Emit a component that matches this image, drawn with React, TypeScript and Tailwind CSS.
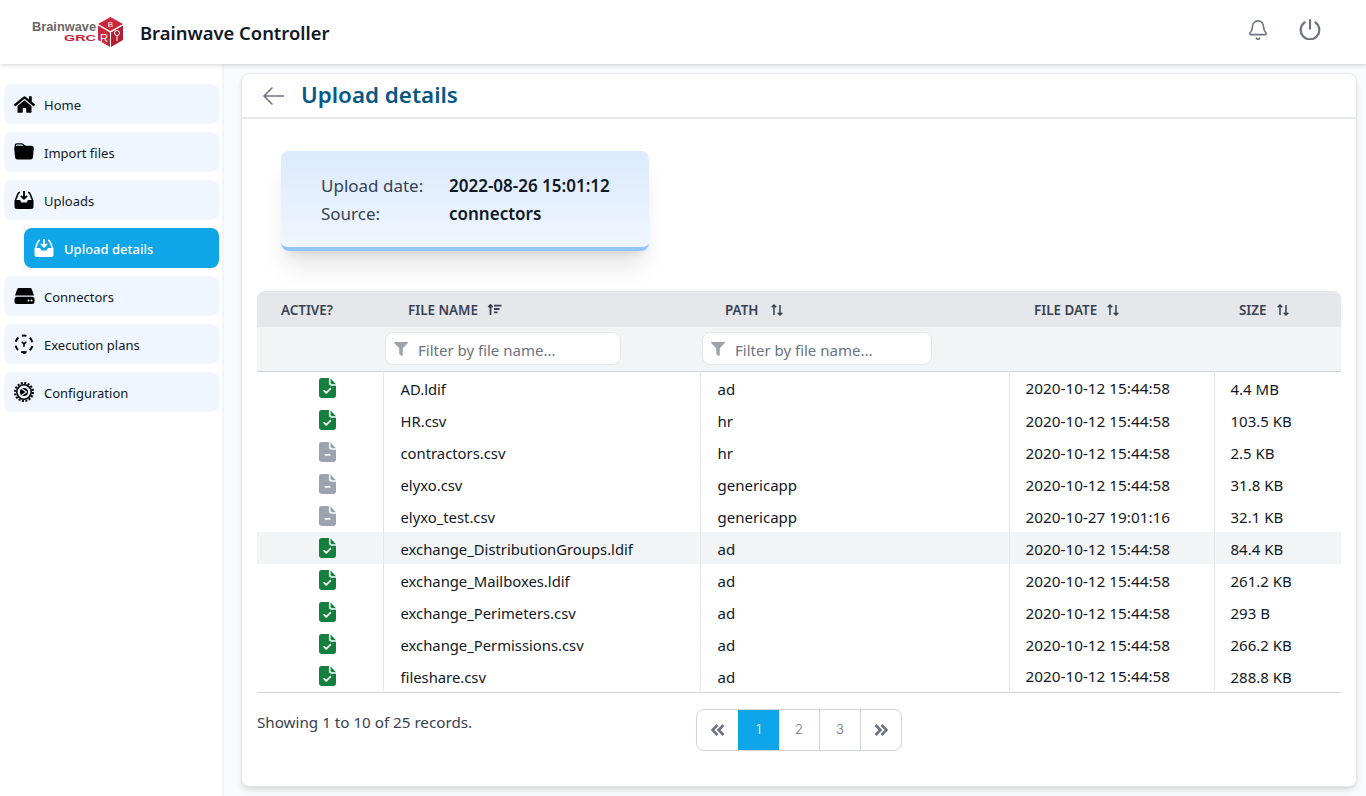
import { Bell } from "lucide-react";
import { BsFolderFill } from "react-icons/bs";
import { FaFilter, FaHome } from "react-icons/fa";

const rows = [
  { active: true, name: "AD.ldif", path: "ad", date: "2020-10-12 15:44:58", size: "4.4 MB" },
  { active: true, name: "HR.csv", path: "hr", date: "2020-10-12 15:44:58", size: "103.5 KB" },
  { active: false, name: "contractors.csv", path: "hr", date: "2020-10-12 15:44:58", size: "2.5 KB" },
  { active: false, name: "elyxo.csv", path: "genericapp", date: "2020-10-12 15:44:58", size: "31.8 KB" },
  { active: false, name: "elyxo_test.csv", path: "genericapp", date: "2020-10-27 19:01:16", size: "32.1 KB" },
  { active: true, name: "exchange_DistributionGroups.ldif", path: "ad", date: "2020-10-12 15:44:58", size: "84.4 KB" },
  { active: true, name: "exchange_Mailboxes.ldif", path: "ad", date: "2020-10-12 15:44:58", size: "261.2 KB" },
  { active: true, name: "exchange_Perimeters.csv", path: "ad", date: "2020-10-12 15:44:58", size: "293 B" },
  { active: true, name: "exchange_Permissions.csv", path: "ad", date: "2020-10-12 15:44:58", size: "266.2 KB" },
  { active: true, name: "fileshare.csv", path: "ad", date: "2020-10-12 15:44:58", size: "288.8 KB" },
];

function InboxIcon() {
  return (
    <svg width="22" height="22" viewBox="0 0 22 22" fill="currentColor">
      <path d="M7 3.500H6.500a1.500 1.500 0 0 0-1.400 1L2.500 11M15 3.500h.5a1.500 1.500 0 0 1 1.400 1L19.500 11" fill="none" stroke="currentColor" strokeWidth="1.600" />
      <path d="M1.500 11h5.500l1.500 2.500h5L15 11h5.500v6.500a2.500 2.500 0 0 1-2.500 2.500H4a2.500 2.500 0 0 1-2.500-2.500z" />
      <path d="M11 2v7.500M8 6.800l3 3 3-3" fill="none" stroke="currentColor" strokeWidth="1.800" />
    </svg>
  );
}

function DriveIcon() {
  return (
    <svg width="21" height="18" viewBox="0 0 21 18" fill="currentColor">
      <path d="M5 1h11a2 2 0 0 1 1.900 1.400L20 8.500H1l2.100-6.100A2 2 0 0 1 5 1z" />
      <path d="M3 9.800h15a2.500 2.500 0 0 1 2.500 2.500v2.200A2.500 2.500 0 0 1 18 17H3a2.500 2.500 0 0 1-2.500-2.500v-2.200A2.500 2.500 0 0 1 3 9.800z" />
      <circle cx="14.500" cy="13.400" r="1" fill="#eff6ff" />
      <circle cx="17.500" cy="13.400" r="1" fill="#eff6ff" />
    </svg>
  );
}

function PlansIcon() {
  return (
    <svg width="22" height="22" viewBox="0 0 22 22" fill="none" stroke="currentColor">
      <circle cx="11" cy="11" r="8.500" strokeWidth="2" strokeDasharray="5 3.900" strokeDashoffset="2.500" transform="rotate(-90 11 11)" />
      <path d="M8.800 8.800 11 11l2.200-2.200M11 11v2.800" strokeWidth="1.600" />
      <path d="M8.500 18.500h5L11 21z" fill="currentColor" strokeWidth="0.500" />
    </svg>
  );
}

function GearIcon() {
  return (
    <svg width="22" height="22" viewBox="0 0 22 22" fill="none" stroke="currentColor">
      <circle cx="11" cy="11" r="9" strokeWidth="2" strokeDasharray="2 1.535" />
      <circle cx="11" cy="11" r="7.200" strokeWidth="1.600" />
      <circle cx="11" cy="11" r="4" fill="currentColor" stroke="none" />
      <path d="M8.500 7.500 13.500 11l-5 3.500" stroke="#eff6ff" strokeWidth="1.100" />
    </svg>
  );
}

function SortIcon({ wide }: { wide?: boolean }) {
  return (
    <svg width="14" height="14" viewBox="0 0 14 14" fill="none" stroke="currentColor" strokeWidth="1.500" className={`${wide ? "ml-3" : "ml-[9px]"} text-[#374151]`}>
      <path d="M4 12V2M1.700 4.300 4 2l2.300 2.300M10 2v10M7.700 9.700 10 12l2.300-2.300" />
    </svg>
  );
}

function SortedIcon() {
  return (
    <svg width="15" height="14" viewBox="0 0 15 14" fill="none" stroke="currentColor" strokeWidth="1.800" className="ml-[9px] text-[#374151]">
      <path d="M3.500 12V2M1.300 4.200 3.500 2l2.200 2.200M7 2.700h7.500M7 6h5.500M7 9.300h3.500" />
    </svg>
  );
}

function FileIcon({ active }: { active: boolean }) {
  return (
    <svg width="17" height="20" viewBox="0 0 18 21" fill="currentColor" className={`${active ? "text-[#15803d]" : "text-[#9ca3af]"} ml-4`}>
      <path d="M2.500 0H10.500v5.500a2.500 2.500 0 0 0 2.500 2.500h5v10.500a2.500 2.500 0 0 1-2.500 2.500h-13A2.500 2.500 0 0 1 0 18.500v-16A2.500 2.500 0 0 1 2.500 0z" />
      <path d="M12.200 0.500 18 6.500h-4.300a1.500 1.500 0 0 1-1.500-1.500z" />
      {active ? (
        <path d="M5 13l2.700 2.700 5-5" fill="none" stroke="#fff" strokeWidth="1.800" />
      ) : (
        <path d="M6 13.500h6" fill="none" stroke="#fff" strokeWidth="1.800" />
      )}
    </svg>
  );
}

function DoubleAngle({ right }: { right?: boolean }) {
  return (
    <svg width="14" height="12" viewBox="0 0 14 12" fill="none" stroke="currentColor" strokeWidth="2.600">
      <path d={right ? "M1.500 1l5 5-5 5M7.500 1l5 5-5 5" : "M6.500 1 1.500 6l5 5M12.500 1l-5 5 5 5"} />
    </svg>
  );
}

function NavItem({ icon, label, active, sub }: { icon: React.ReactNode; label: string; active?: boolean; sub?: boolean }) {
  return (
    <div className={`${sub ? "ml-5" : ""} ${active ? "bg-[#0ea5e9] text-white font-medium" : "bg-[#eff6ff] text-[#111827]"} h-10 rounded-lg flex items-center pl-[9px] text-[13px]`}>
      <span className={`w-[22px] flex justify-center ${active ? "text-white" : "text-black"}`}>{icon}</span>
      <span className="ml-[9px] pt-[3px]">{label}</span>
    </div>
  );
}

// logo: wordmark + red cube
function Logo() {
  return (
    <svg width="92" height="32" viewBox="0 0 92 32" className="ml-8 shrink-0">
      <text x="0" y="15.300" fontSize="12" fontWeight="700" fontFamily="Liberation Sans" fill="#6b6663" textLength="64" lengthAdjust="spacingAndGlyphs">Brainwave</text>
      <text x="32" y="25.200" fontSize="9" fontWeight="700" fontFamily="Liberation Sans" fill="#c8202f" textLength="32" lengthAdjust="spacingAndGlyphs">GRC</text>
      <g transform="translate(65 0)">
        <path d="M13.500 1 26 8 13.500 15 1 8z" fill="#c8283a" />
        <path d="M1 9.500 13 16.500V31L1 24z" fill="#c8283a" />
        <path d="M14 16.500 26 9.500V24L14 31z" fill="#b31f30" />
        <text x="13.500" y="10.500" textAnchor="middle" fontSize="8" fill="#fff" fontFamily="Liberation Sans">B</text>
        <text x="7" y="26" textAnchor="middle" fontSize="11" fill="#fff" fontFamily="Liberation Sans">R</text>
        <circle cx="20" cy="17" r="2.500" fill="none" stroke="#fff" strokeWidth="1" />
        <path d="M20 19.500V25" stroke="#fff" strokeWidth="1" />
      </g>
    </svg>
  );
}

function FilterInput({ width }: { width: string }) {
  return (
    <div className={`${width} h-[33px] bg-white border border-[#e5e7eb] rounded-lg flex items-center pl-2 text-[15px] text-[#6b7280]`}>
      <FaFilter size={14} className="text-[#9ca3af]" />
      <span className="ml-[10px] pt-[2px]">Filter by file name...</span>
    </div>
  );
}

export default function App() {
  return (
    <div className="h-screen overflow-hidden flex flex-col bg-[#f9fafb] font-['Noto_Sans',sans-serif]">
      <header className="h-16 shrink-0 bg-white shadow-[0_1px_4px_rgba(0,0,0,0.18)] z-10 flex items-center">
        <Logo />
        <h1 className="ml-4 pt-[2px] text-[18.4px] font-semibold text-[#111827]">Brainwave Controller</h1>
        <div className="ml-auto flex items-center gap-[30px] mr-[45px] mb-[5px] text-[#6b7280]">
          <Bell size={22} strokeWidth={1.75} />
          <svg width="22" height="21" viewBox="0 0 22 21" fill="none" stroke="currentColor" strokeWidth="2.200" strokeLinecap="round">
            <path d="M11 1.200v8.500M16.400 3.400A9.300 9.300 0 1 1 5.600 3.400" />
          </svg>
        </div>
      </header>

      <div className="flex-1 flex min-h-0">
        <aside className="w-56 shrink-0 bg-white border-r-2 border-[#f3f4f6] pl-1 pr-[3px] pt-5 flex flex-col gap-2">
          <NavItem icon={<FaHome size={21} />} label="Home" />
          <NavItem icon={<BsFolderFill size={20} />} label="Import files" />
          <NavItem icon={<InboxIcon />} label="Uploads" />
          <NavItem icon={<InboxIcon />} label="Upload details" active sub />
          <NavItem icon={<DriveIcon />} label="Connectors" />
          <NavItem icon={<PlansIcon />} label="Execution plans" />
          <NavItem icon={<GearIcon />} label="Configuration" />
        </aside>

        <main className="flex-1 min-w-0 pt-[9px] pl-[17px] pr-[9px] pb-[9px]">
          <div className="h-full bg-white rounded-lg border border-[#e5e7eb] shadow-md flex flex-col">
            <div className="h-[45px] shrink-0 border-b-2 border-[#e5e7eb] flex items-center pl-5">
              <svg width="24" height="20" viewBox="0 0 24 20" fill="none" stroke="currentColor" strokeWidth="1.500" className="text-[#6b7280]">
                <path d="M22 10H2M10.500 1.500 2 10l8.500 8.500" />
              </svg>
              <h2 className="ml-[15px] mb-px text-[22.400px] font-semibold text-[#075985]">Upload details</h2>
            </div>

            <div className="px-[15px] pt-8">
              <div className="ml-6 w-[368px] h-[100px] rounded-lg border-b-4 border-[#93c5fd] bg-gradient-to-b from-[#dbeafe] to-[#eff6ff] shadow-xl flex flex-col justify-center pl-10 pt-[2px] text-[17px] leading-7">
                <div className="flex">
                  <span className="w-32 text-[#374151]">Upload date:</span>
                  <span className="font-semibold text-[#111827]">2022-08-26 15:01:12</span>
                </div>
                <div className="flex">
                  <span className="w-32 text-[#374151]">Source:</span>
                  <span className="font-semibold text-[#111827]">connectors</span>
                </div>
              </div>

              <table className="mt-10 w-[1084px] table-fixed border-collapse text-[14.800px] text-[#111827]">
                <colgroup>
                  <col className="w-[126px]" />
                  <col className="w-[317px]" />
                  <col className="w-[309px]" />
                  <col className="w-[205px]" />
                  <col className="w-[127px]" />
                </colgroup>
                <thead>
                  <tr className="h-9 bg-[#e5e7eb] text-[13.400px] text-[#374151] text-left">
                    <th className="pl-6 pt-[2px] font-semibold rounded-tl-lg">ACTIVE?</th>
                    <th className="pl-[25px] pt-[2px] font-semibold"><span className="flex items-center">FILE NAME<SortedIcon /></span></th>
                    <th className="pl-[25px] pt-[2px] font-semibold"><span className="flex items-center">PATH<SortIcon wide /></span></th>
                    <th className="pl-[25px] pt-[2px] font-semibold"><span className="flex items-center">FILE DATE<SortIcon /></span></th>
                    <th className="pl-[25px] pt-[2px] font-semibold rounded-tr-lg"><span className="flex items-center">SIZE<SortIcon /></span></th>
                  </tr>
                  <tr className="h-[44px] bg-[#f3f4f6] border-b border-[#d1d5db]">
                    <th />
                    <th className="pl-[2px] font-normal text-left"><FilterInput width="w-[236px]" /></th>
                    <th className="pl-[2px] font-normal text-left"><FilterInput width="w-[230px]" /></th>
                    <th />
                    <th />
                  </tr>
                </thead>
                <tbody className="border-b border-[#d1d5db]">
                  {rows.map((row, i) => (
                    <tr key={row.name} className={`${i === 0 ? "h-[33px]" : "h-8"} ${i === 5 ? "bg-[#f3f4f6]" : ""}`}>
                      <td>
                        <span className="flex justify-center"><FileIcon active={row.active} /></span>
                      </td>
                      <td className="pl-[17px] pt-[2px] border-l border-[#e5e7eb]">{row.name}</td>
                      <td className="pl-[17px] pt-[2px] border-l border-[#e5e7eb] text-[15px]">{row.path}</td>
                      <td className="pl-4 pt-[2px] border-l border-[#e5e7eb] text-[15.300px]">{row.date}</td>
                      <td className="pl-4 pt-[2px] border-l border-[#e5e7eb] text-[15px]">{row.size}</td>
                    </tr>
                  ))}
                </tbody>
              </table>

              <div className="relative mt-4 h-[42px] flex justify-center text-[15.200px]">
                <span className="absolute left-0 top-[2px] text-[#374151]">Showing 1 to 10 of 25 records.</span>
                <div className="flex h-[42px] border border-[#d1d5db] rounded-lg overflow-hidden text-[#6b7280] text-[13px] font-['Inter',sans-serif] font-light">
                  <div className="w-[41px] flex items-center justify-center"><DoubleAngle /></div>
                  <div className="w-[41px] flex items-center justify-center bg-[#0ea5e9] text-white">1</div>
                  <div className="w-[41px] flex items-center justify-center border-r border-[#d1d5db]">2</div>
                  <div className="w-[41px] flex items-center justify-center border-r border-[#d1d5db]">3</div>
                  <div className="w-10 flex items-center justify-center"><DoubleAngle right /></div>
                </div>
              </div>
            </div>
          </div>
        </main>
      </div>
    </div>
  );
}
